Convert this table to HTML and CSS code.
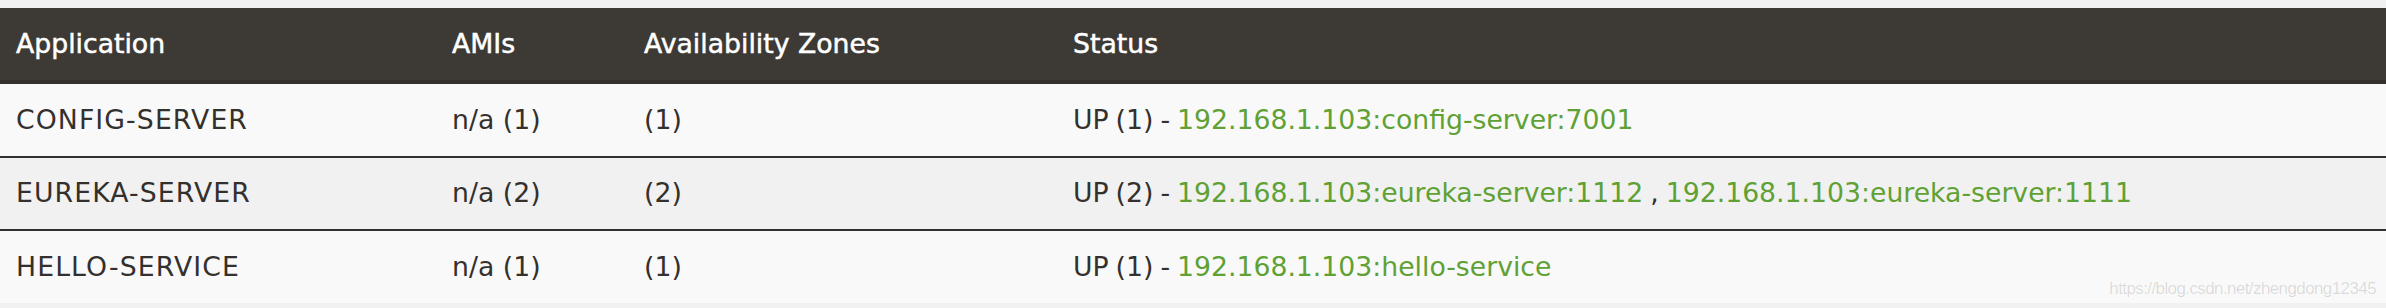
FILE: index.html
```html
<!DOCTYPE html>
<html lang="en">
<head>
<meta charset="utf-8">
<title>Instances currently registered with Eureka</title>
<link rel="stylesheet" href="styles.css">
</head>
<body>
<div class="page">
  <table class="apps">
    <colgroup>
      <col class="c-app">
      <col class="c-ami">
      <col class="c-zone">
      <col class="c-status">
    </colgroup>
    <thead>
      <tr>
        <th>Application</th>
        <th>AMIs</th>
        <th>Availability Zones</th>
        <th>Status</th>
      </tr>
    </thead>
    <tbody>
      <tr class="odd">
        <td class="name">CONFIG-SERVER</td>
        <td>n/a (1)</td>
        <td>(1)</td>
        <td class="status">UP (1) - <a href="#">192.168.1.103:config-server:7001</a></td>
      </tr>
      <tr class="even">
        <td class="name">EUREKA-SERVER</td>
        <td>n/a (2)</td>
        <td>(2)</td>
        <td class="status">UP (2) - <a href="#">192.168.1.103:eureka-server:1112</a> , <a href="#">192.168.1.103:eureka-server:1111</a></td>
      </tr>
      <tr class="odd">
        <td class="name">HELLO-SERVICE</td>
        <td>n/a (1)</td>
        <td>(1)</td>
        <td class="status">UP (1) - <a href="#">192.168.1.103:hello-service</a></td>
      </tr>
    </tbody>
  </table>
  <div class="watermark">https://blog.csdn.net/zhengdong12345</div>
</div>
</body>
</html>
```

FILE: styles.css
```css
html, body {
  margin: 0;
  padding: 0;
  background: #f1f1f1;
}

.page {
  position: relative;
  padding-top: 8px;
  height: 300px;
  font-family: "DejaVu Sans", "Open Sans", sans-serif;
  font-size: 26.7px;
  color: #34302d;
}

.apps {
  width: 100%;
  border-collapse: collapse;
  table-layout: fixed;
}

.c-app { width: 436px; }
.c-ami { width: 192px; }
.c-zone { width: 429px; }

.apps th,
.apps td {
  padding: 0 0 2px 16px;
  text-align: left;
  white-space: nowrap;
  vertical-align: middle;
}

.apps th {
  height: 70px;
  background: #3d3a35;
  color: #ffffff;
  font-weight: normal;
  -webkit-text-stroke: 0.5px #ffffff;
  border-bottom: 4px solid #34302d;
}

.apps td {
  height: 70px;
}

.apps td.name {
  letter-spacing: 1.1px;
}

.apps td.status {
  word-spacing: -1.5px;
}

.apps tbody tr + tr td {
  border-top: 2px solid #34302d;
}

.apps tr.odd td { background: #f9f9f9; }
.apps tr.even td { background: #f1f1f1; height: 69px; }

.apps a {
  color: #5fa134;
  text-decoration: none;
}

.watermark {
  position: absolute;
  right: 10px;
  top: 279px;
  font-family: "Liberation Sans", Arial, sans-serif;
  font-size: 17px;
  letter-spacing: -0.6px;
  color: rgba(0, 0, 0, 0.13);
}
```
